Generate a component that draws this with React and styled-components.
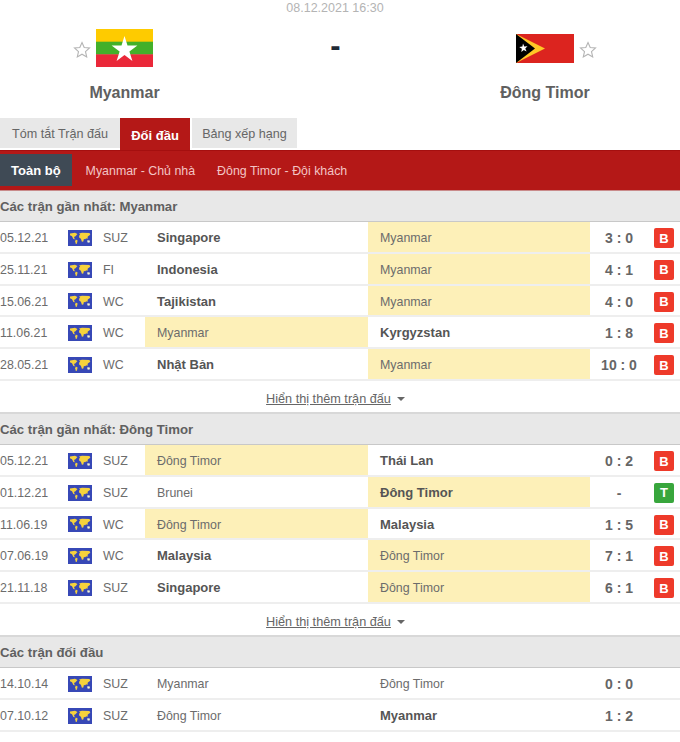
import React from 'react'
import styled, { createGlobalStyle } from 'styled-components'

const Global = createGlobalStyle`
  html, body { margin: 0; padding: 0; background: #fff; }
  body { font-family: "Liberation Sans", Arial, sans-serif; color: #555; overflow: hidden; }
`

const Star = () => (
  <StarIcon viewBox="0 0 18 18">
    <path d="M9 1.500l2.200 5 5.300.5-4 3.600 1.200 5.400L9 13.200 4.300 16l1.200-5.400-4-3.600 5.300-.5z" fill="none" stroke="#b4b4b4" strokeWidth="1.100" />
  </StarIcon>
)

const MyanmarFlag = () => (
  <FlagSvg viewBox="0 0 57 38" $w={57} $h={38}>
    <rect width="57" height="13" fill="#fecb00" />
    <rect y="12.700" width="57" height="13" fill="#43b02a" />
    <rect y="25.300" width="57" height="12.700" fill="#ea2839" />
    <path d="M28.500 7l3 9.600h9.900l-8 5.900 3 9.500-7.900-5.900-7.900 5.900 3-9.500-8-5.900h9.900z" fill="#fff" />
  </FlagSvg>
)

const TimorFlag = () => (
  <FlagSvg viewBox="0 0 58 29" $w={58} $h={29}>
    <rect width="58" height="29" fill="#dc241f" />
    <path d="M0 0l29 14.500L0 29z" fill="#ffc726" />
    <path d="M0 0l19 14.500L0 29z" fill="#000" />
    <path d="M7 9.500l1.300 3 3.200-.3-2.200 2.300 1.300 3-2.800-1.600-2.500 2 .6-3.200-2.700-1.700 3.200-.4z" fill="#fff" />
  </FlagSvg>
)

const WorldIcon = () => (
  <World viewBox="0 0 24 16">
    <rect width="24" height="16" fill="#3748b6" />
    <path d="M2 3.500l5-.8 2.500 1.300-2 2.300-1.500.7.800 2.300-1.400-.3-1.400-2.800L2 5.200z" fill="#f6d23c" />
    <path d="M7.800 9.500l1.800 1-.8 3.300-1 .2-.6-2.800z" fill="#f6d23c" />
    <path d="M11 3.500l3-.8 7.500.3.800 1.800-2.500 1.700-.4 2.400-1.200-.6-1 1-1.300-.4-.6 2.600-1.400.3-1-3-1.600-1-.3-2 1.200-1z" fill="#f6d23c" />
    <path d="M19 10.500l2.500-.3.500 2-2.200.5z" fill="#f2f2d0" />
  </World>
)

const Row = ({ m }) => (
  <RowEl>
    <DateCell>{m.date}</DateCell>
    <WorldIcon />
    <Code>{m.code}</Code>
    <Team $bold={m.win === 'home'} $hl={m.hl === 'home'}>{m.home}</Team>
    <Team $bold={m.win === 'away'} $hl={m.hl === 'away'}>{m.away}</Team>
    <Score>{m.score}</Score>
    {m.res && <BadgeCell><Badge $win={m.res === 'T'}>{m.res}</Badge></BadgeCell>}
  </RowEl>
)

const sections = [
  {
    title: 'Các trận gần nhất: Myanmar',
    more: true,
    rows: [
      { date: '05.12.21', code: 'SUZ', home: 'Singapore', away: 'Myanmar', score: '3 : 0', res: 'B', win: 'home', hl: 'away' },
      { date: '25.11.21', code: 'FI', home: 'Indonesia', away: 'Myanmar', score: '4 : 1', res: 'B', win: 'home', hl: 'away' },
      { date: '15.06.21', code: 'WC', home: 'Tajikistan', away: 'Myanmar', score: '4 : 0', res: 'B', win: 'home', hl: 'away' },
      { date: '11.06.21', code: 'WC', home: 'Myanmar', away: 'Kyrgyzstan', score: '1 : 8', res: 'B', win: 'away', hl: 'home' },
      { date: '28.05.21', code: 'WC', home: 'Nhật Bản', away: 'Myanmar', score: '10 : 0', res: 'B', win: 'home', hl: 'away' },
    ],
  },
  {
    title: 'Các trận gần nhất: Đông Timor',
    more: true,
    rows: [
      { date: '05.12.21', code: 'SUZ', home: 'Đông Timor', away: 'Thái Lan', score: '0 : 2', res: 'B', win: 'away', hl: 'home' },
      { date: '01.12.21', code: 'SUZ', home: 'Brunei', away: 'Đông Timor', score: '-', res: 'T', win: 'away', hl: 'away' },
      { date: '11.06.19', code: 'WC', home: 'Đông Timor', away: 'Malaysia', score: '1 : 5', res: 'B', win: 'away', hl: 'home' },
      { date: '07.06.19', code: 'WC', home: 'Malaysia', away: 'Đông Timor', score: '7 : 1', res: 'B', win: 'home', hl: 'away' },
      { date: '21.11.18', code: 'SUZ', home: 'Singapore', away: 'Đông Timor', score: '6 : 1', res: 'B', win: 'home', hl: 'away' },
    ],
  },
  {
    title: 'Các trận đối đầu',
    rows: [
      { date: '14.10.14', code: 'SUZ', home: 'Myanmar', away: 'Đông Timor', score: '0 : 0' },
      { date: '07.10.12', code: 'SUZ', home: 'Đông Timor', away: 'Myanmar', score: '1 : 2', win: 'away' },
    ],
  },
]

export default function App() {
  return (
    <Page>
      <Global />
      <MatchDate>08.12.2021 16:30</MatchDate>
      <Header>
        <Side>
          <FlagLine>
            <StarLeft><Star /></StarLeft>
            <MyanmarFlag />
          </FlagLine>
          <TeamName>Myanmar</TeamName>
        </Side>
        <Dash>-</Dash>
        <Side>
          <FlagLine>
            <TimorFlag />
            <StarRight><Star /></StarRight>
          </FlagLine>
          <TeamName>Đông Timor</TeamName>
        </Side>
      </Header>
      <Tabs>
        <Tab $w={120}>Tóm tắt Trận đấu</Tab>
        <Tab $w={70} $active>Đối đầu</Tab>
        <Tab $w={105} $gap>Bảng xếp hạng</Tab>
      </Tabs>
      <SubBar>
        <SubTab $active>Toàn bộ</SubTab>
        <SubTab>Myanmar - Chủ nhà</SubTab>
        <SubTab>Đông Timor - Đội khách</SubTab>
      </SubBar>
      {sections.map((s) => (
        <section key={s.title}>
          <SectionTitle>{s.title}</SectionTitle>
          {s.rows.map((m) => <Row key={m.date + m.home} m={m} />)}
          {s.more && (
            <More>
              <MoreLink>Hiển thị thêm trận đấu</MoreLink>
              <Caret />
            </More>
          )}
        </section>
      ))}
    </Page>
  )
}

const Page = styled.div`
  width: 680px;
  height: 742px;
  overflow: hidden;
  font-size: 12.4px;
`

const MatchDate = styled.div`
  height: 16px;
  line-height: 16px;
  text-align: center;
  font-size: 12.5px;
  color: #b4b4b4;
  margin-right: 10px;
`

const Header = styled.div`
  display: grid;
  grid-template-columns: 249px 1fr 250px;
  height: 102px;
  padding-right: 10px;
`

const Side = styled.div`
  display: flex;
  flex-direction: column;
  align-items: center;
`

const FlagLine = styled.div`
  position: relative;
  display: flex;
  align-items: center;
  height: 38px;
  margin-top: 13px;
`

const FlagSvg = styled.svg`
  width: ${(p) => p.$w}px;
  height: ${(p) => p.$h}px;
  display: block;
`

const StarIcon = styled.svg`
  width: 18px;
  height: 18px;
  display: block;
`

const StarLeft = styled.span`
  position: absolute;
  left: -23px;
  top: 12px;
`

const StarRight = styled.span`
  position: absolute;
  right: -23px;
  top: 12px;
`

const TeamName = styled.div`
  margin-top: 16px;
  font-size: 16px;
  line-height: 20px;
  font-weight: 700;
  color: #606060;
`

const Dash = styled.div`
  text-align: center;
  font-size: 31px;
  font-weight: 700;
  line-height: 38px;
  margin-top: 11px;
  padding-left: 2px;
  color: #1f2a36;
`

const Tabs = styled.div`
  display: flex;
  height: 31px;
  margin-bottom: 1px;
`

const Tab = styled.div`
  width: ${(p) => p.$w}px;
  margin-left: ${(p) => (p.$gap ? 2 : 0)}px;
  height: ${(p) => (p.$active ? 32 : 30)}px;
  box-sizing: border-box;
  padding-top: 2px;
  display: flex;
  align-items: center;
  justify-content: center;
  font-size: ${(p) => (p.$active ? 13 : 12.6)}px;
  font-weight: ${(p) => (p.$active ? 700 : 400)};
  color: ${(p) => (p.$active ? '#fff' : '#666')};
  background: ${(p) => (p.$active ? '#b41817' : '#e8e8e8')};
`

const SubBar = styled.div`
  display: flex;
  height: 41px;
  padding-top: 3px;
  padding-bottom: 4px;
  box-sizing: border-box;
  background: #b41817;
  border-top: 1px solid #a50f0f;
  border-bottom: 1px solid #c98b8b;
`

const SubTab = styled.div`
  display: flex;
  align-items: center;
  padding: ${(p) => (p.$active ? '1px 11px 0' : '1px 10px 0 12px')};
  margin-right: ${(p) => (p.$active ? 2 : 0)}px;
  font-size: ${(p) => (p.$active ? 13 : 12.4)}px;
  font-weight: ${(p) => (p.$active ? 700 : 400)};
  color: ${(p) => (p.$active ? '#fff' : '#f3c4c4')};
  background: ${(p) => (p.$active ? '#3f4a55' : 'transparent')};
`

const SectionTitle = styled.div`
  height: 31px;
  line-height: 32px;
  box-sizing: border-box;
  background: #e8e8e8;
  border-bottom: 1px solid #c8c8c8;
  font-size: 13.200px;
  font-weight: 700;
  color: #606060;
`

const RowEl = styled.div`
  display: grid;
  grid-template-columns: 68px 24px 53px 223px 222px 58px 1fr;
  grid-template-rows: 29.750px;
  align-items: stretch;
  height: 31.750px;
  box-sizing: border-box;
  border-bottom: 2px solid #eeeeee;
  font-size: 12.400px;
  color: #6c6c6c;
`

const DateCell = styled.div`
  line-height: 33px;
`

const World = styled.svg`
  width: 24px;
  height: 16px;
  align-self: center;
  margin-top: 2px;
  display: block;
`

const Code = styled.div`
  padding-left: 11px;
  line-height: 33px;
`

const Team = styled.div`
  padding-left: 12px;
  line-height: 32px;
  font-size: ${(p) => (p.$bold ? 13 : 12.4)}px;
  font-weight: ${(p) => (p.$bold ? 700 : 400)};
  color: ${(p) => (p.$bold ? '#555' : '#6c6c6c')};
  background: ${(p) => (p.$hl ? '#fdf0b8' : 'transparent')};
`

const Score = styled.div`
  text-align: center;
  line-height: 32px;
  font-size: 14px;
  font-weight: 700;
  color: #666;
`

const BadgeCell = styled.div`
  display: flex;
  align-items: flex-start;
  padding: 6px 0 0 6px;
`

const Badge = styled.span`
  width: 20px;
  height: 20px;
  border-radius: 2px;
  display: flex;
  align-items: center;
  justify-content: center;
  color: #fff;
  font-weight: 700;
  font-size: 13px;
  background: ${(p) => (p.$win ? '#38a63c' : '#ee3a2a')};
`

const More = styled.div`
  height: 33.250px;
  box-sizing: border-box;
  display: flex;
  align-items: center;
  justify-content: center;
  gap: 6px;
  padding: 5px 9px 0 0;
  border-bottom: 2px solid #d8d8d8;
  font-size: 12.700px;
  color: #666;
`

const MoreLink = styled.span`
  text-decoration: underline;
`

const Caret = styled.span`
  width: 0;
  height: 0;
  border-left: 4px solid transparent;
  border-right: 4px solid transparent;
  border-top: 4px solid #666;
`
